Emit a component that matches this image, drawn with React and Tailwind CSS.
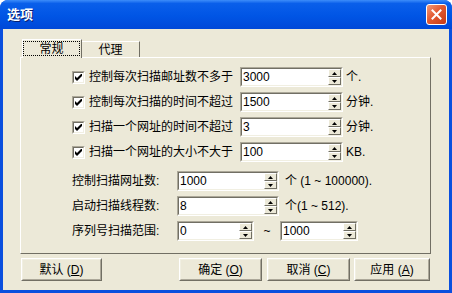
import React from 'react';

const FONT = "font-['Liberation_Sans','Noto_Sans_CJK_SC',sans-serif]";

function Check() {
  return (
    <div className="flex h-[13px] w-[13px] border border-t-[#ACA899] border-l-[#ACA899] border-r-white border-b-white">
      <div className="flex flex-1 items-center justify-center border border-t-[#716F64] border-l-[#716F64] border-r-[#F1EFE2] border-b-[#F1EFE2] bg-white">
        <svg width="7" height="7" viewBox="0 0 7 7">
          <path d="M0 2v3l2 2 5-5V-1L2 4z" fill="#000" />
        </svg>
      </div>
    </div>
  );
}

function Spinner() {
  return (
    <div className="flex w-[13px] flex-col">
      <div className="flex flex-1 items-center justify-center border border-t-white border-l-white border-r-[#716F64] border-b-[#716F64] bg-[#ECE9D8]">
        <svg width="5" height="3" viewBox="0 0 5 3">
          <path d="M2.5 0L5 3H0z" fill="#000" />
        </svg>
      </div>
      <div className="flex flex-1 items-center justify-center border border-t-white border-l-white border-r-[#716F64] border-b-[#716F64] bg-[#ECE9D8]">
        <svg width="5" height="3" viewBox="0 0 5 3">
          <path d="M0 0h5L2.5 3z" fill="#000" />
        </svg>
      </div>
    </div>
  );
}

function SpinBox({ value, w }) {
  return (
    <div className={`flex h-[20px] ${w} border border-t-[#ACA899] border-l-[#ACA899] border-r-white border-b-white`}>
      <div className="flex flex-1 border border-t-[#716F64] border-l-[#716F64] border-r-[#F1EFE2] border-b-[#F1EFE2] bg-white">
        <span className="flex-1 pl-[1px] text-[12px] leading-[16px] text-black">{value}</span>
        <Spinner />
      </div>
    </div>
  );
}

function CheckRow({ label, value, unit }) {
  return (
    <div className="flex h-[20px] items-center">
      <Check />
      <span className="ml-[4px] w-[151px] whitespace-nowrap text-[12px]">{label}</span>
      <SpinBox value={value} w="w-[103px]" />
      <span className="ml-[3px] whitespace-nowrap text-[12px]">{unit}</span>
    </div>
  );
}

function Button({ children, w, className = '' }) {
  return (
    <div className={`flex h-[23px] ${w} ${className} border border-t-white border-l-white border-r-[#716F64] border-b-[#716F64]`}>
      <div className="flex flex-1 items-center justify-center border border-t-[#F1EFE2] border-l-[#F1EFE2] border-r-[#ACA899] border-b-[#ACA899] bg-[#ECE9D8] text-[12px] text-black">
        {children}
      </div>
    </div>
  );
}

export default function App() {
  return (
    <div className={`flex h-[293px] w-[452px] flex-col overflow-hidden rounded-t-[8px] bg-[#0A4FDE] ${FONT}`}>
      {/* Title bar */}
      <div className="flex h-[29px] items-center pl-[7px] pr-[5px] bg-[linear-gradient(#3D8DFA_0%,#0A5FEA_12%,#0055E5_55%,#0048D8_100%)]">
        <span className="text-[13px] font-bold text-white [text-shadow:1px_1px_0_#0A1E6E]">选项</span>
        <div className="ml-auto flex h-[21px] w-[21px] items-center justify-center rounded-[3px] border border-white bg-[linear-gradient(135deg,#F09A7A_0%,#E35A32_45%,#C73A14_100%)]">
          <svg width="11" height="11" viewBox="0 0 11 11">
            <path d="M1.5 1.5l8 8M9.5 1.5l-8 8" stroke="#fff" strokeWidth="2" strokeLinecap="square" />
          </svg>
        </div>
      </div>

      {/* Client area */}
      <div className="mx-[3px] flex h-[261px] flex-col bg-[#ECE9D8] text-black">
        {/* Tabs */}
        <div className="flex h-[28px] items-end pl-[19px]">
          <div className="relative z-10 -mb-[1px] flex h-[19px] w-[60px] items-start border-t border-l border-r border-t-white border-l-white border-r-[#716F64] bg-[#ECE9D8] pt-[1px]">
            <div className="flex h-[15px] w-[57px] items-center justify-center border border-dotted border-black text-[12px]">常规</div>
          </div>
          <div className="flex h-[16px] w-[58px] items-center justify-center border-t border-r border-t-white border-r-[#716F64] text-[12px]">代理</div>
        </div>

        {/* Panel */}
        <div className="ml-[17px] flex h-[197px] w-[411px] flex-col gap-[5px] border border-t-white border-l-white border-r-[#716F64] border-b-[#716F64] pl-[51px] pt-[9px]">
          <CheckRow label="控制每次扫描邮址数不多于" value="3000" unit="个." />
          <CheckRow label="控制每次扫描的时间不超过" value="1500" unit="分钟." />
          <CheckRow label="扫描一个网址的时间不超过" value="3" unit="分钟." />
          <CheckRow label="扫描一个网址的大小不大于" value="100" unit="KB." />

          <div className="mt-[4px] flex h-[20px] items-center">
            <span className="w-[105px] whitespace-nowrap text-[12px]">控制扫描网址数:</span>
            <SpinBox value="1000" w="w-[102px]" />
            <span className="ml-[6px] whitespace-nowrap text-[12px]">个 (1 ~ 100000).</span>
          </div>
          <div className="flex h-[20px] items-center">
            <span className="w-[105px] whitespace-nowrap text-[12px]">启动扫描线程数:</span>
            <SpinBox value="8" w="w-[102px]" />
            <span className="ml-[6px] whitespace-nowrap text-[12px]">个(1 ~ 512).</span>
          </div>
          <div className="flex h-[20px] items-center">
            <span className="w-[105px] whitespace-nowrap text-[12px]">序列号扫描范围:</span>
            <SpinBox value="0" w="w-[77px]" />
            <span className="w-[26px] text-center text-[12px]">~</span>
            <SpinBox value="1000" w="w-[78px]" />
          </div>
        </div>

        {/* Buttons */}
        <div className="mt-[4px] flex pl-[18px]">
          <Button w="w-[81px]">默认 (<u>D</u>)</Button>
          <Button w="w-[83px]" className="ml-[77px]">确定 (<u>O</u>)</Button>
          <Button w="w-[83px]" className="ml-[5px]">取消 (<u>C</u>)</Button>
          <Button w="w-[76px]" className="ml-[4px]">应用 (<u>A</u>)</Button>
        </div>
      </div>
    </div>
  );
}
